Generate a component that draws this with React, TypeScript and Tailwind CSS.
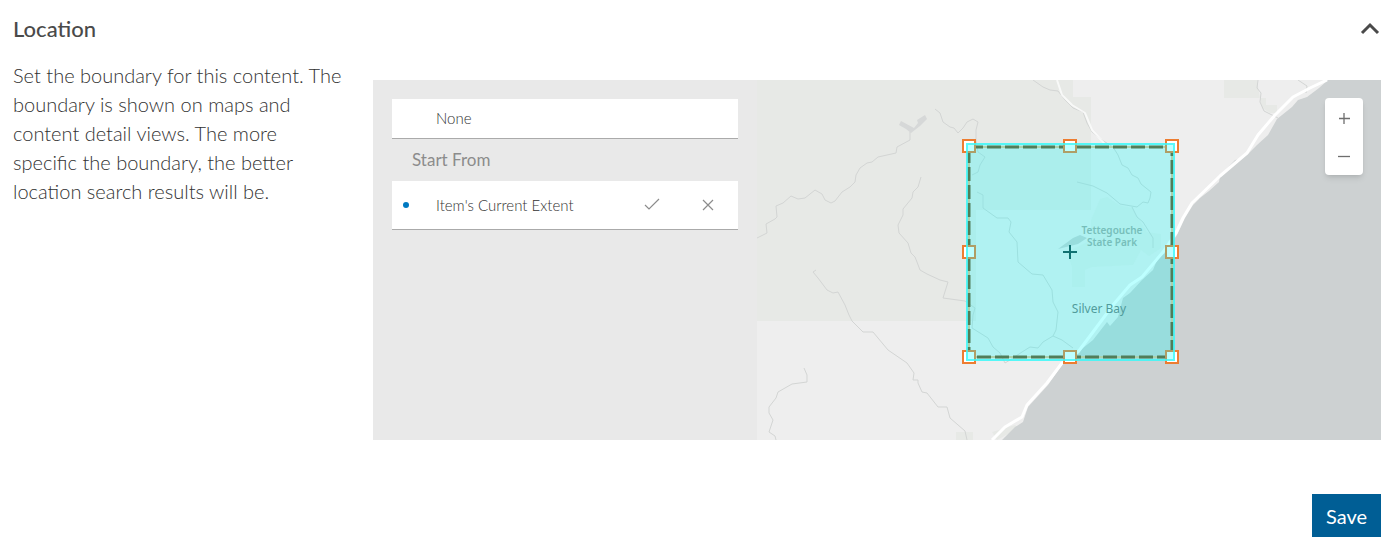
import { useState } from "react";

const HANDLES = [
  [212, 66], [313, 66], [415, 66],
  [212, 172], [415, 172],
  [212, 277], [313, 277], [415, 277],
];

const STREAMS = [
  "M0 158 10 153 9 144 18 139 20 137 19 126 26 123 34 116 41 119 48 118 58 110 65 114 68 120 74 123 78 121 85 112 93 107 98 102 99 95 103 88 110 83 115 82 121 77 139 73 140 67 153 60 153 52",
  "M178 29 183 33 186 42 193 47 197 48 201 53 206 48 210 42 216 39 221 42 219 50 219 60 221 72 228 77 223 85 221 92 215 95",
  "M164 97 161 107 156 112 155 118 146 129 146 135 141 145 142 153 151 163 154 173 158 177 160 182 163 190 170 194 183 200 191 202 186 218 208 221 218 228 216 235 215 248 231 258 236 267 243 273 248 283 253 280 265 272 273 267 281 268 286 262 296 256 305 260 316 268",
  "M59 190 56 192 61 198 70 210 76 213 81 212 88 225 92 235 95 241 106 252 116 252 131 270 150 283 157 293 156 300 161 300 161 303 165 312 170 313 181 327 190 327 193 338 208 351 210 360",
  "M47 288 50 295 50 302 35 304 21 312 19 318 12 327 12 333 16 340 12 352 18 356 19 360",
  "M276 0 286 7 293 10 301 11 308 20 316 28 326 32 330 43 335 52 345 60 356 67 361 75 365 85 371 88 375 95 381 98 384 104 394 112 393 118 391 123 386 122 380 127 363 124 350 113 336 106 320 102",
  "M375 127 380 137 386 142 396 158 396 168",
  "M220 112 226 115 226 128 240 138 251 138 254 142 252 152 260 162 261 182 275 194 286 195 295 210 296 222 301 232 299 250 296 256",
  "M501 0 500 8 504 13 503 22 507 31 513 34 521 38",
  "M541 0 550 6 549 13",
];

function ExtentMap() {
  return (
    <svg
      viewBox="0 0 624 360"
      preserveAspectRatio="xMidYMid slice"
      className="absolute inset-0 h-full w-full"
      role="img"
      aria-label="Map"
    >
      <rect width="624" height="360" fill="#eeeeee" />
      <path d="M0 0H316V17H334V130H219V241H0Z" fill="#e7e9e6" />
      <path d="M467 0H500L503 18H467Z" fill="#e7e9e6" />
      <path d="M503 18H509V25H520V33H513L505 28Z" fill="#e7e9e6" />
      <path d="M199 352H216V360H199ZM235 352 258 345 262 348 240 360Z" fill="#e7e9e6" />
      <path
        d="M334 140 343 119 350 117 362 125 375 128 390 152 404 154 404 168 392 176 384 170 376 185 335 187 328 190V207H315V187L310 172 334 160Z"
        fill="#e9ebe8"
      />
      <path d="M144 41 142 45 149 49 154 53 163 46 170 39 168 35 160 40 161 43 157 48Z" fill="#d6d8d8" />
      <path d="M301 169 316 158 323 155 330 158 321 164Z" fill="#cdd1d2" />

      {/* Lake and shoreline */}
      <path
        d="M571 0 562 8 550 17 541 20 535 27 520 39 511 55 500 65 491 74 483 79 478 80 463 96 462 102 452 111 443 118 436 125 428 138 420 155 408 173 400 180 396 190 385 200 373 213 366 218 361 237 353 246 350 242 336 260 321 272 305 285 291 305 271 327 266 342 258 347 248 357 245 360H624V0Z"
        fill="#cdd1d2"
      />
      <g fill="none" stroke="#d3d5d4" strokeWidth="1" strokeLinejoin="round">
        {STREAMS.map((d) => (
          <path key={d} d={d} />
        ))}
      </g>
      <g fill="none" stroke="#ffffff" strokeLinejoin="round">
        <path d="M300 0 305 15 315 25 328 33 335 50 347 63" strokeWidth="2" opacity="0.7" />
        <path
          d="M570 0 553 8 536 17 518 35 501 55 490 73 463 96 435 123 426 138 419 153 406 172 385 197 373 205 356 225 336 252 321 272 305 283 290 303 270 325 265 337 248 347 235 360"
          strokeWidth="3"
        />
      </g>

      <g fontFamily="'Noto Sans', sans-serif" textAnchor="middle">
        <g fill="#a1a8a2" fontSize="10" fontWeight="600">
          <text x="355" y="154">Tettegouche</text>
          <text x="355" y="166">State Park</text>
        </g>
        <text x="342" y="233" fill="#6e7878" fontSize="12">Silver Bay</text>
      </g>

      {/* Extent graphic */}
      <rect x="212" y="67" width="203" height="210" fill="none" stroke="#e8c090" strokeWidth="2" />
      <rect
        x="212"
        y="67"
        width="203"
        height="210"
        fill="none"
        stroke="#6e5020"
        strokeWidth="3"
        strokeDasharray="14 4"
      />
      {HANDLES.map(([x, y]) => (
        <rect key={`${x}-${y}`} x={x - 6} y={y - 6} width="12" height="12" fill="#ffffff" stroke="#ed7d31" strokeWidth="2" />
      ))}
      <path d="M313 165V179M306 172H320" stroke="#164040" strokeWidth="2" />
      <rect x="209" y="63" width="209" height="218" fill="#00ffff" fillOpacity="0.26" />
      <rect x="210" y="64" width="207" height="216" fill="none" stroke="#40f8f8" strokeWidth="2" strokeOpacity="0.8" />
    </svg>
  );
}

export default function App() {
  const [open, setOpen] = useState(true);

  return (
    <main className="bg-white px-[13px] pt-[11px] pb-[10px] font-[Lato,sans-serif] text-[#4a4a4a]">
      <header className="flex items-center justify-between">
        <h2 className="text-[22px] leading-9 font-medium">Location</h2>
        <button type="button" aria-label="Toggle section" aria-expanded={open} onClick={() => setOpen(!open)}>
          <svg width="22" height="22" viewBox="0 0 22 22" fill="none" stroke="#4a4a4a" strokeWidth="3">
            <path d="M3 15 11 7 19 15" />
          </svg>
        </button>
      </header>

      {open && (
        <div className="mt-[14px] flex">
          <p className="w-[336px] shrink-0 pr-1 text-[20px] leading-[29px] font-light text-[#323232]">
            Set the boundary for this content. The boundary is shown on maps and content detail views. The more
            specific the boundary, the better location search results will be.
          </p>

          <section className="mt-[19px] ml-6 flex min-h-[360px] flex-1 bg-[#e9e9e9]">
            <div className="w-96 shrink-0 p-[19px] text-[15px] font-light text-[#323232]">
              <button type="button" className="block h-10 w-full border-b border-[#aaaaaa] bg-white pl-11 text-left">
                None
              </button>
              <h3 className="pl-5 text-[17px] leading-[42px] font-normal text-[#8c8c8c]">Start From</h3>
              <div className="flex h-[49px] items-center border-b border-[#aaaaaa] bg-white">
                <span className="ml-[11px] h-[6px] w-[6px] rounded-full bg-[#0079c1]" />
                <button type="button" className="ml-[27px] flex-1 text-left">
                  Item&apos;s Current Extent
                </button>
                <button type="button" aria-label="Apply" className="mr-10">
                  <svg width="16" height="16" viewBox="0 0 16 16" fill="none" stroke="#8c8c8c" strokeWidth="1.2">
                    <path d="M1 8 5 12 15 2" />
                  </svg>
                </button>
                <button type="button" aria-label="Remove" className="mr-[22px]">
                  <svg width="16" height="16" viewBox="0 0 16 16" fill="none" stroke="#8c8c8c" strokeWidth="1.2">
                    <path d="M3 3 13 13M13 3 3 13" />
                  </svg>
                </button>
              </div>
            </div>

            <div className="relative flex-1 overflow-hidden">
              <ExtentMap />
              <div className="absolute top-[18px] right-[18px] flex w-[38px] flex-col rounded bg-white shadow-md">
                <button type="button" aria-label="Zoom in" className="flex h-[39px] items-center justify-center">
                  <svg width="16" height="16" viewBox="0 0 16 16" stroke="#6e6e6e" strokeWidth="1.3">
                    <path d="M8 3V14M3 8.500H14" />
                  </svg>
                </button>
                <button type="button" aria-label="Zoom out" className="flex h-[38px] items-center justify-center">
                  <svg width="16" height="16" viewBox="0 0 16 16" stroke="#6e6e6e" strokeWidth="1.3">
                    <path d="M2 8.500H14" />
                  </svg>
                </button>
              </div>
            </div>
          </section>
        </div>
      )}

      <footer className="mt-[54px] flex justify-end">
        <button type="button" className="h-[43px] bg-[#005e95] px-[14px] text-[20px] text-white">
          Save
        </button>
      </footer>
    </main>
  );
}
